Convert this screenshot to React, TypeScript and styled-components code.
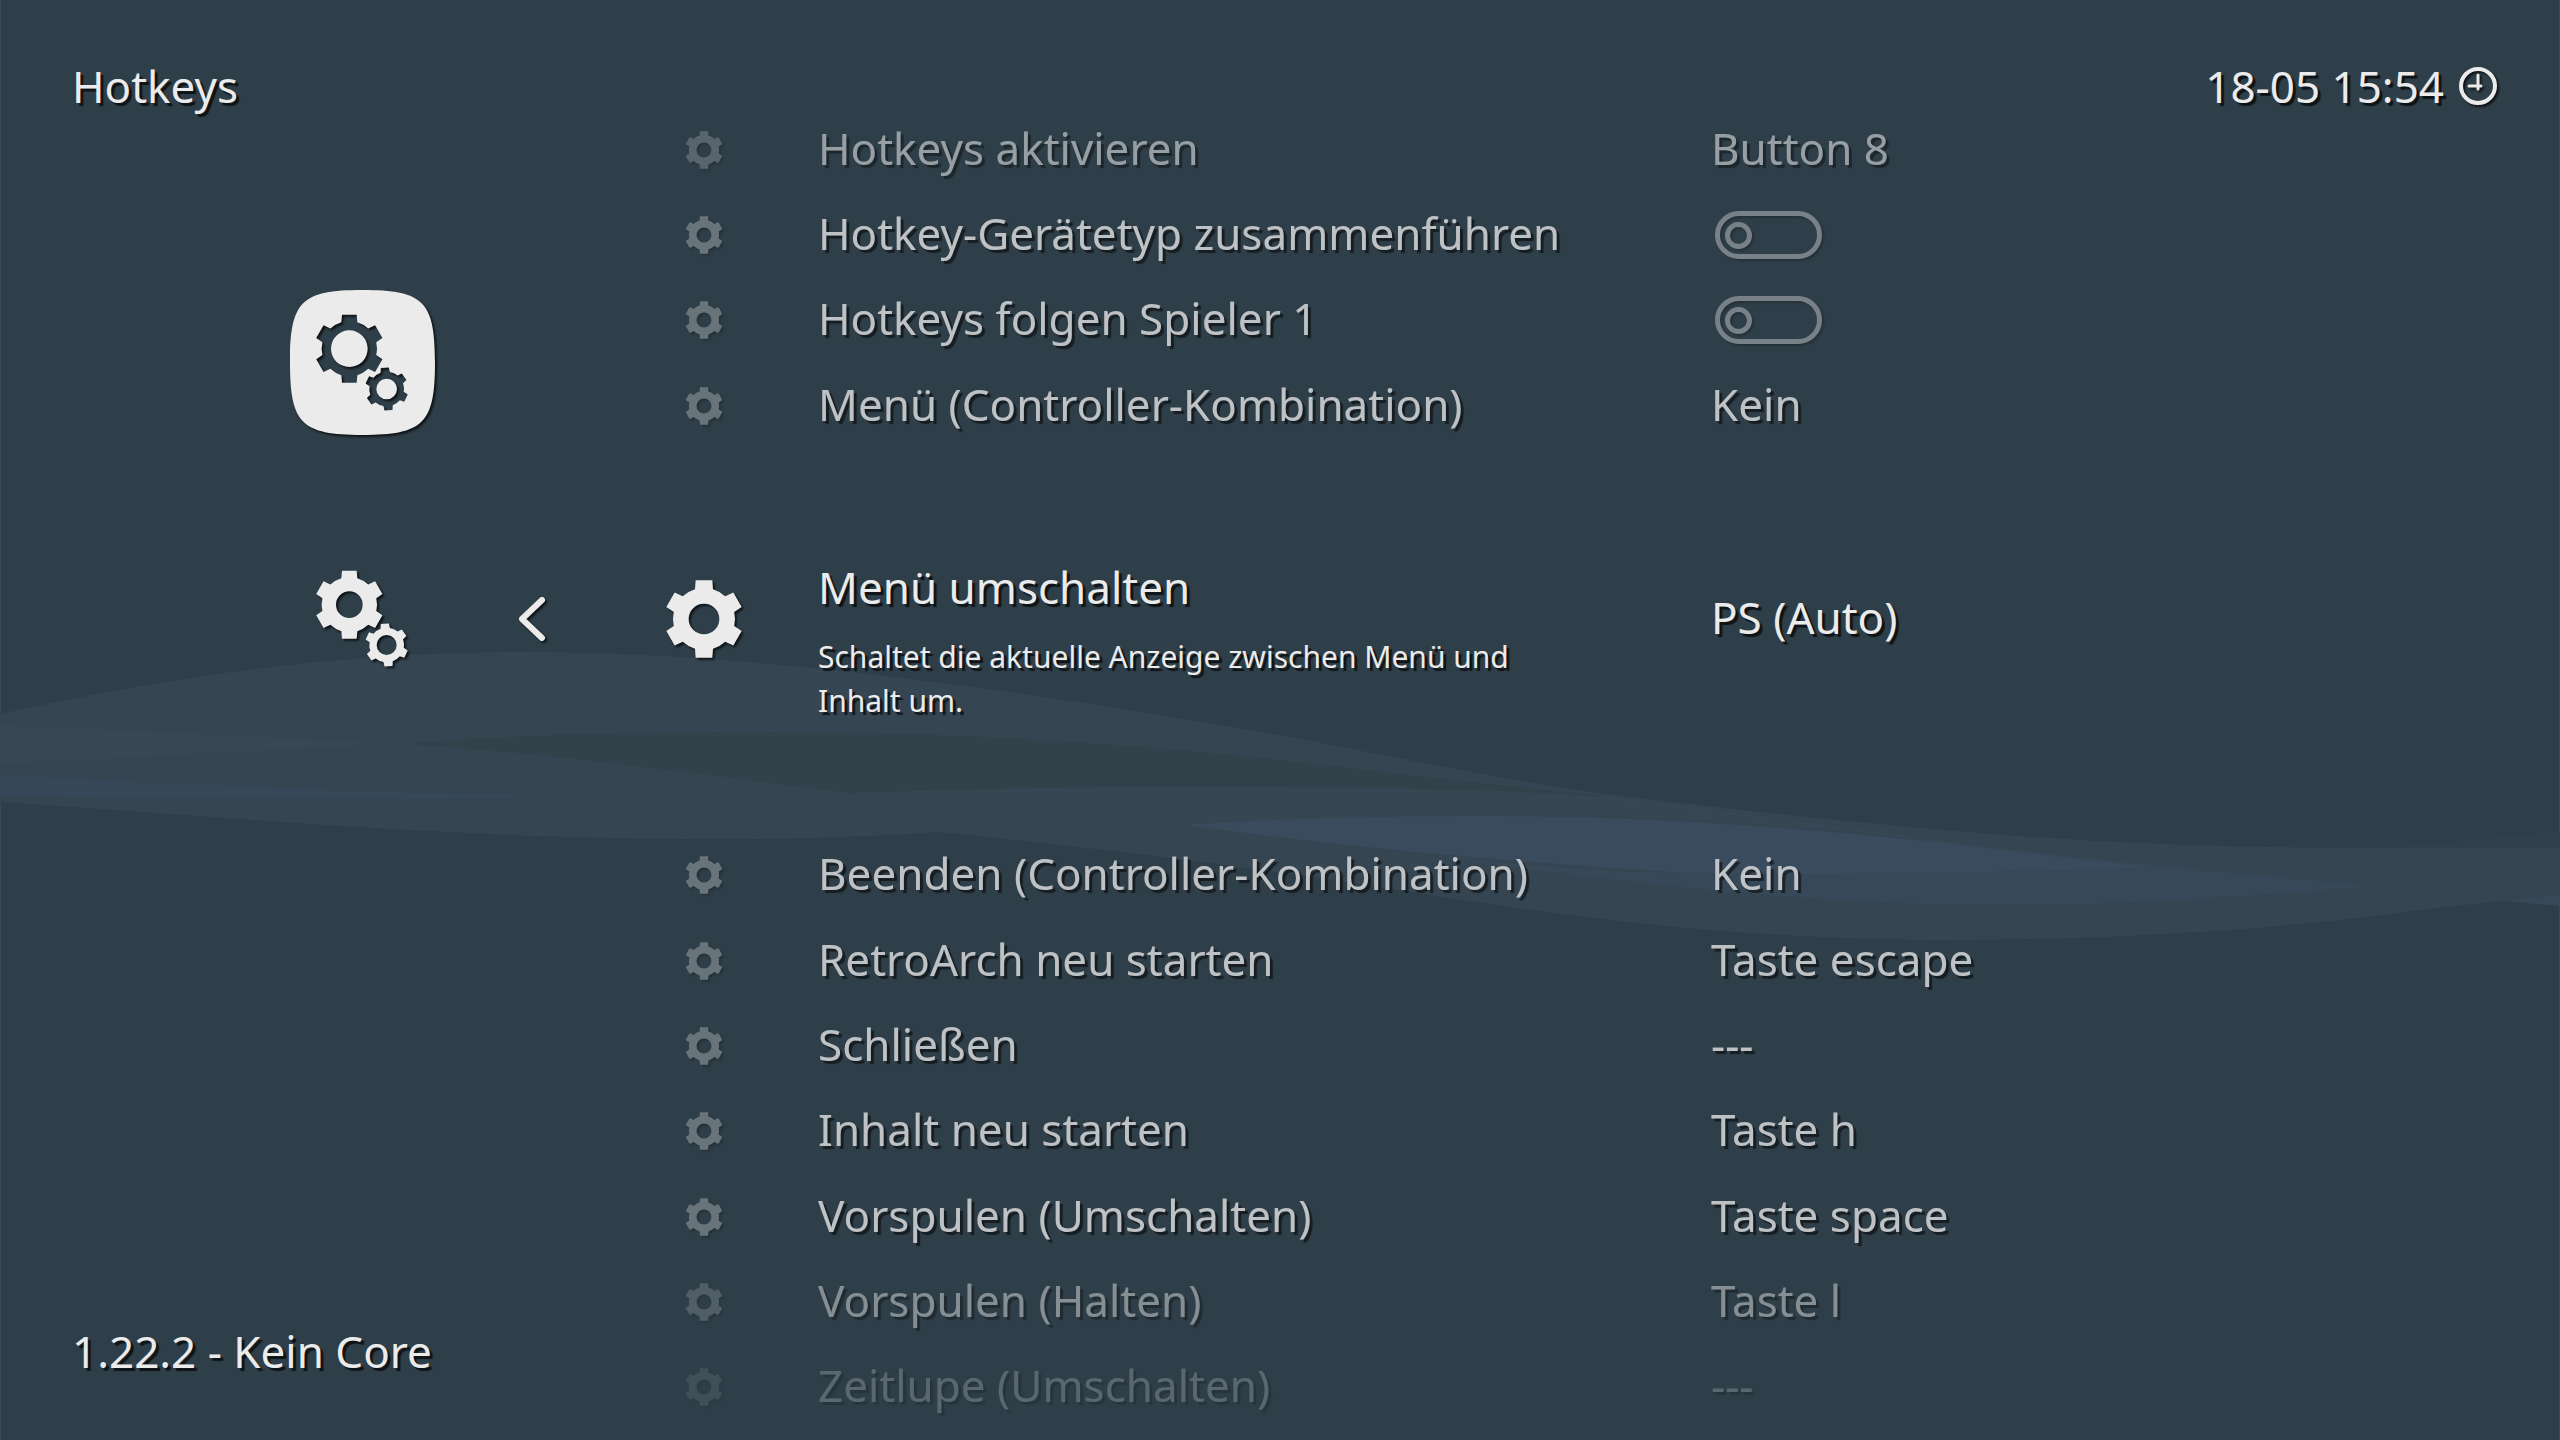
import React from "react";
import styled, { createGlobalStyle, css } from "styled-components";

const GlobalStyle = createGlobalStyle`
  *, *::before, *::after { box-sizing: border-box; }
  html, body, #root { height: 100%; margin: 0; }
  body { background: #2f3f49; overflow: hidden; }
`;

const ink = "#ebebeb";
const lineHeight = "60px";

const Screen = styled.main`
  position: relative;
  isolation: isolate;
  display: grid;
  grid-template-columns: 640px 1fr 440px;
  min-height: 100vh;
  overflow: hidden;
  color: ${ink};
  font: 400 44px/${lineHeight} "Noto Sans", "Open Sans", sans-serif;
  text-shadow: 3px 3px 1px rgba(0, 0, 0, 0.7);
  box-shadow: inset 1px 0 #3b4a54, inset -1px 0 #3b4a54;
`;

const Ribbon = styled.svg`
  position: absolute;
  inset: 0;
  z-index: -1;
  width: 100%;
  height: 100%;
`;

const Side = styled.aside`
  display: flex;
  flex-direction: column;
  padding: 56px 0 59px;
`;

const Title = styled.h1`
  margin: 0;
  padding-left: 72px;
  font: inherit;
`;

const Version = styled.footer`
  margin-top: auto;
  padding-left: 72px;
`;

const Tabs = styled.nav`
  display: flex;
  flex-direction: column;
  gap: 111px;
  padding: 174px 0 0 290px;
`;

const TabLine = styled.div`
  display: flex;
  align-items: center;
  gap: 76px;
`;

const Tab = styled.button`
  display: block;
  padding: 0;
  border: 0;
  background: none;
  color: inherit;
`;

const Icon = styled.svg<{ $size: number }>`
  display: block;
  width: ${(p) => p.$size}px;
  height: ${(p) => p.$size}px;
  overflow: visible;
  fill: currentColor;
  filter: drop-shadow(2px 2px 1px rgba(0, 0, 0, 0.7));
`;

const StrokeIcon = styled(Icon)`
  fill: none;
  stroke: currentColor;
  stroke-linecap: round;
  stroke-linejoin: round;
`;

const Clock = styled.header`
  display: flex;
  justify-content: flex-end;
  align-items: center;
  align-self: start;
  gap: 14px;
  padding: 56px 62px 0 0;
  white-space: nowrap;
`;

const List = styled.ul`
  display: flex;
  flex-direction: column;
  margin: 0;
  padding: 107px 0 10px;
  list-style: none;
`;

const Item = styled.li<{ $active?: boolean; $fade: number }>`
  display: flex;
  flex: ${(p) => (p.$active ? 9 : 2)} 1 0;
  opacity: ${(p) => p.$fade};
`;

const rowStyle = css`
  display: grid;
  grid-template-columns: 128px 50px 893px 1fr;
  align-items: center;
  width: 100%;
  padding: 0;
  border: 0;
  background: none;
  color: inherit;
  font: inherit;
  text-align: left;
  text-shadow: inherit;
  white-space: nowrap;
`;

const ButtonRow = styled.button`
  ${rowStyle}
`;

const ToggleRow = styled.label`
  ${rowStyle}
`;

const Mark = styled.span<{ $active?: boolean }>`
  display: flex;
  justify-content: center;
  padding-bottom: ${(p) => (p.$active ? 42 : 0)}px;
  opacity: ${(p) => (p.$active ? 1 : 0.4)};
`;

const Label = styled.span`
  grid-column: 3;
  padding-bottom: 4px;
`;

const Value = styled.span<{ $active?: boolean }>`
  padding-bottom: ${(p) => (p.$active ? 46 : 4)}px;
`;

const Detail = styled.span`
  display: flex;
  flex-direction: column;
  gap: 18px;
  grid-column: 3;
`;

const Hint = styled.small`
  width: 720px;
  font-size: 30px;
  line-height: 44px;
  white-space: normal;
`;

const Switch = styled.input`
  appearance: none;
  display: flex;
  align-items: center;
  width: 107px;
  height: 48px;
  margin: 0 0 0 4px;
  padding-left: 5px;
  border: 5px solid ${ink};
  border-radius: 24px;
  opacity: 0.5;
  filter: drop-shadow(2px 2px 1px rgba(0, 0, 0, 0.6));

  &::before {
    content: "";
    width: 27px;
    height: 27px;
    border: 5px solid ${ink};
    border-radius: 50%;
  }

  &:checked {
    justify-content: flex-end;
    padding: 0 5px 0 0;
  }
`;

type GearShape = {
  x: number;
  y: number;
  outer: number;
  body: number;
  hole: number;
  tip: number;
  base: number;
  turn?: number;
};

/* Six-toothed wheel: flared teeth joined by arcs of the body circle, with a round hub. */
function gearPath({ x, y, outer, body, hole, tip, base, turn = 0 }: GearShape) {
  const at = (angle: number, side: number, out: number) => {
    const a = (angle * Math.PI) / 180;
    const px = x + side * Math.cos(a) + out * Math.sin(a);
    const py = y + side * Math.sin(a) - out * Math.cos(a);
    return `${px.toFixed(1)} ${py.toFixed(1)}`;
  };
  const root = Math.sqrt(body * body - base * base);
  let d = "";
  for (let i = 0; i < 6; i++) {
    const a = turn + i * 60;
    d += i === 0 ? `M${at(a, -base, root)}` : `A${body} ${body} 0 0 1 ${at(a, -base, root)}`;
    d += `L${at(a, -tip, outer)}L${at(a, tip, outer)}L${at(a, base, root)}`;
  }
  d += `A${body} ${body} 0 0 1 ${at(turn, -base, root)}Z`;
  d += `M${x - hole} ${y}a${hole} ${hole} 0 1 0 ${hole * 2} 0a${hole} ${hole} 0 1 0 ${-hole * 2} 0Z`;
  return d;
}

const singleGear = gearPath({ x: 117, y: 117, outer: 116, body: 93, hole: 46, tip: 25, base: 27 });

const pairOfGears = (bigHole: number, smallHole: number) =>
  gearPath({ x: 178, y: 176, outer: 102, body: 83, hole: bigHole, tip: 22, base: 24 }) +
  gearPath({ x: 290, y: 297, outer: 64, body: 52, hole: smallHole, tip: 12, base: 14, turn: -5 });

const tile =
  "M217 0C401 0 435 34 435 217C435 401 401 435 217 435C34 435 0 401 0 217C0 34 34 0 217 0Z";

const GearIcon = ({ size }: { size: number }) => (
  <Icon $size={size} viewBox="0 0 234 234" aria-hidden="true">
    <path fillRule="evenodd" d={singleGear} />
  </Icon>
);

const Waves = () => (
  <Ribbon viewBox="0 0 2560 1440" preserveAspectRatio="none" aria-hidden="true">
    <path
      fill="#354551"
      d="M0 714C170 676 340 652 522 652C760 652 1020 690 1280 735C1400 758 1500 779 1606 794C1720 808 1830 820 1933 829C2080 842 2220 848 2374 848H2560V897C2520 899 2460 905 2423 910C2260 932 2100 940 1933 940C1740 938 1600 921 1443 897C1340 880 1140 852 939 832C850 838 770 840 678 839C450 838 240 818 0 802Z"
    />
    <path fill="#31414b" d="M2374 848C2440 844 2500 838 2560 831V848Z" />
    <path
      fill="#31424b"
      d="M408 744C520 734 640 732 760 732C960 732 1130 744 1280 760C1400 774 1500 786 1606 796C1480 789 1380 787 1280 787C1120 785 980 789 849 793C700 774 560 754 408 744Z"
    />
    <path fill="#374753" d="M0 725C140 730 280 738 408 744C270 750 130 758 0 764Z" />
    <path
      fill="#364652"
      d="M849 793C980 789 1120 785 1280 787C1400 788 1500 792 1606 797C1790 820 1970 845 2162 867C1990 845 1700 810 1484 816C1380 817 1280 819 1184 824C1080 810 960 805 849 793Z"
    />
    <path fill="#364858" d="M0 775C210 786 420 794 637 798C420 799 210 798 0 796Z" />
    <path
      fill="#3a4b5d"
      d="M1184 825C1280 818 1390 816 1484 816C1700 816 1900 836 2162 867C2000 873 1850 876 1688 873C1500 862 1340 846 1184 825Z"
    />
    <path
      fill="#374959"
      d="M1380 848C1480 862 1580 872 1688 873C1850 876 2000 873 2162 867L2374 886C2240 897 2120 905 1998 905C1770 904 1580 876 1380 848Z"
    />
    <path fill="#374959" d="M2504 901L2560 895V906Z" />
    <path fill="none" stroke="#374857" strokeWidth="2" d="M1606 798C1800 820 1960 848 2162 867" />
  </Ribbon>
);

type Entry = { label: string; value?: string; fade: number; hint?: string };

const entries: Entry[] = [
  { label: "Hotkeys aktivieren", value: "Button 8", fade: 0.56 },
  { label: "Hotkey-Gerätetyp zusammenführen", fade: 0.76 },
  { label: "Hotkeys folgen Spieler 1", fade: 0.76 },
  { label: "Menü (Controller-Kombination)", value: "Kein", fade: 0.76 },
  {
    label: "Menü umschalten",
    value: "PS (Auto)",
    fade: 1,
    hint: "Schaltet die aktuelle Anzeige zwischen Menü und Inhalt um.",
  },
  { label: "Beenden (Controller-Kombination)", value: "Kein", fade: 0.76 },
  { label: "RetroArch neu starten", value: "Taste escape", fade: 0.76 },
  { label: "Schließen", value: "---", fade: 0.76 },
  { label: "Inhalt neu starten", value: "Taste h", fade: 0.76 },
  { label: "Vorspulen (Umschalten)", value: "Taste space", fade: 0.76 },
  { label: "Vorspulen (Halten)", value: "Taste l", fade: 0.46 },
  { label: "Zeitlupe (Umschalten)", value: "---", fade: 0.23 },
];

function EntryRow({ label, value, fade, hint }: Entry) {
  if (value === undefined) {
    return (
      <Item $fade={fade}>
        <ToggleRow>
          <Mark>
            <GearIcon size={38} />
          </Mark>
          <Label>{label}</Label>
          <Switch type="checkbox" role="switch" />
        </ToggleRow>
      </Item>
    );
  }
  const active = hint !== undefined;
  return (
    <Item $fade={fade} $active={active}>
      <ButtonRow type="button">
        <Mark $active={active}>
          <GearIcon size={active ? 78 : 38} />
        </Mark>
        {active ? (
          <Detail>
            <span>{label}</span>
            <Hint>{hint}</Hint>
          </Detail>
        ) : (
          <Label>{label}</Label>
        )}
        <Value $active={active}>{value}</Value>
      </ButtonRow>
    </Item>
  );
}

export default function App() {
  return (
    <>
      <GlobalStyle />
      <Screen>
        <Waves />
        <Side>
          <Title>Hotkeys</Title>
          <Tabs>
            <TabLine>
              <Tab type="button" aria-label="Einstellungen">
                <Icon $size={145} viewBox="0 0 435 435">
                  <path fillRule="evenodd" d={tile + pairOfGears(55, 31)} />
                </Icon>
              </Tab>
            </TabLine>
            <TabLine>
              <Tab type="button" aria-label="Hotkeys">
                <Icon $size={145} viewBox="0 0 435 435">
                  <path fillRule="evenodd" d={pairOfGears(40, 30)} />
                </Icon>
              </Tab>
              <Tab type="button" aria-label="Zurück">
                <StrokeIcon $size={40} viewBox="0 0 40 40" strokeWidth="6">
                  <path d="M31 1L11 20L31 39" />
                </StrokeIcon>
              </Tab>
            </TabLine>
          </Tabs>
          <Version>1.22.2 - Kein Core</Version>
        </Side>
        <List>
          {entries.map((entry) => (
            <EntryRow key={entry.label} {...entry} />
          ))}
        </List>
        <Clock>
          <time>18-05 15:54</time>
          <StrokeIcon $size={40} viewBox="0 0 40 40" strokeWidth="4" aria-hidden="true">
            <circle cx="20" cy="20" r="17" />
            <path d="M20 9V23M11 20H23" strokeWidth="3" />
          </StrokeIcon>
        </Clock>
      </Screen>
    </>
  );
}
